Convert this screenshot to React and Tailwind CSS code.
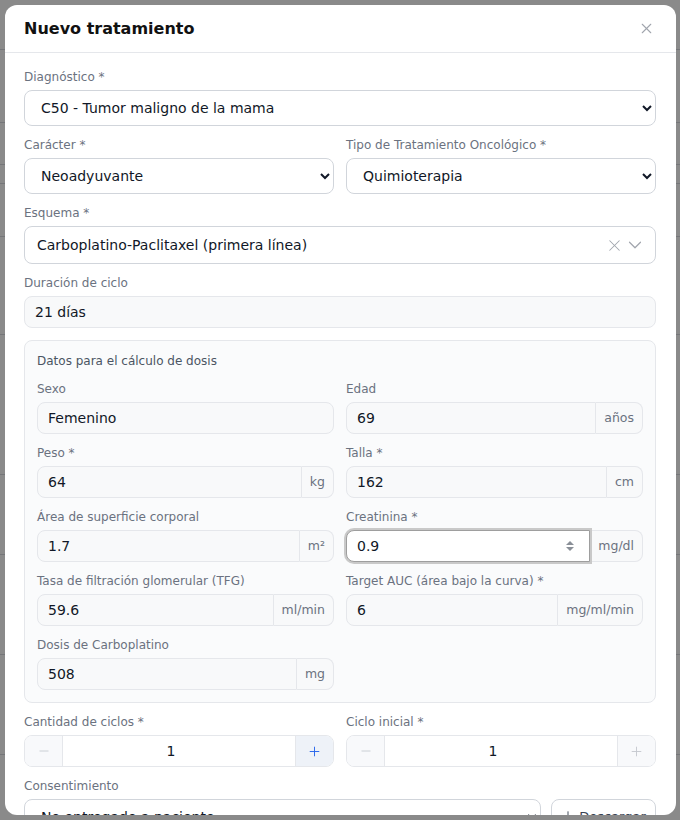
import { X, ChevronDown, Minus, Plus, Download } from 'lucide-react';

const font = { fontFamily: '"DejaVu Sans", "Noto Sans", sans-serif' };

function Label({ children }) {
  return <p className="mb-[5px] h-4 text-[12px] leading-4 text-[#6b7280]">{children}</p>;
}

function NativeSelect({ label, value, className = '' }) {
  return (
    <div className={className}>
      <Label>{label}</Label>
      <select
        defaultValue={value}
        className="h-9 w-full rounded-lg border border-[#d1d5db] bg-white px-3 text-[14px] text-[#111827]"
      >
        <option>{value}</option>
      </select>
    </div>
  );
}

function UnitInput({ label, value, unit, focused }) {
  return (
    <div>
      <Label>{label}</Label>
      <div className="flex h-8">
        {focused ? (
          <div className="relative z-10 flex flex-1 items-center rounded-l-lg border border-[#9e9e9e] bg-white shadow-[0_0_0_2px_#c9c9c9]">
            <input
              readOnly
              value={value}
              className="min-w-0 flex-1 bg-transparent px-[10px] text-[14px] text-[#111827] outline-none"
            />
            <svg width="10" height="14" viewBox="0 0 10 14" className="mr-[14px]">
              <path d="M1 6 L5 2 L9 6 Z" fill="#8a8f97" />
              <path d="M1 8 L5 12 L9 8 Z" fill="#8a8f97" />
            </svg>
          </div>
        ) : (
          <input
            readOnly
            value={value}
            className="min-w-0 flex-1 rounded-l-lg border border-[#e5e7eb] bg-[#f8f9fa] px-[10px] text-[14px] text-[#111827] outline-none"
          />
        )}
        <span className="flex items-center rounded-r-lg border border-l-0 border-[#e5e7eb] bg-[#f8f9fa] px-[8px] text-[12.5px] text-[#6b7280]">
          {unit}
        </span>
      </div>
    </div>
  );
}

function Stepper({ label, active }) {
  return (
    <div>
      <Label>{label}</Label>
      <div className="flex h-8 overflow-hidden rounded-lg border border-[#e5e7eb]">
        <button className="flex w-[38px] items-center justify-center border-r border-[#e5e7eb] bg-[#f8f9fb] text-[#c5c9cf]">
          <Minus size={14} strokeWidth={1.5} />
        </button>
        <div className="flex flex-1 items-center justify-center bg-white pr-4 text-[14px] text-[#111827]">1</div>
        <button
          className={
            active
              ? 'flex w-[38px] items-center justify-center border-l border-[#e5e7eb] bg-[#eef2f8] text-[#2563eb]'
              : 'flex w-[38px] items-center justify-center border-l border-[#e5e7eb] bg-[#f8f9fb] text-[#c5c9cf]'
          }
        >
          <Plus size={15} strokeWidth={1.5} />
        </button>
      </div>
    </div>
  );
}

const pageRows = [50, 73, 42, 19, 53, 98, 140, 80, 100, 100, 100];

export default function App() {
  return (
    <div className="relative h-[820px] w-[680px] overflow-hidden bg-white" style={font}>
      {/* page behind the dialog */}
      <div className="flex flex-col">
        {pageRows.map((h, i) => (
          <div key={i} className="border-b border-[#d9dbe0]" style={{ height: h }} />
        ))}
      </div>

      <div className="absolute inset-0 bg-[#000000]/[0.46] pl-[5px] pt-[5px]">
        <div className="flex h-[810px] w-[671px] flex-col overflow-hidden rounded-xl bg-white">
          <header className="flex h-12 shrink-0 items-center justify-between border-b border-[#e5e7eb] pl-[19px] pr-[21px]">
            <h2 className="text-[16px] font-bold text-[#111]">Nuevo tratamiento</h2>
            <X size={17} strokeWidth={1.5} className="text-[#a1a5ad]" />
          </header>

          <div className="flex flex-col gap-[11px] pl-[19px] pr-5 pt-4">
            <NativeSelect label="Diagnóstico *" value="C50 - Tumor maligno de la mama" />

            <div className="grid grid-cols-2 gap-3">
              <NativeSelect label="Carácter *" value="Neoadyuvante" />
              <NativeSelect label="Tipo de Tratamiento Oncológico *" value="Quimioterapia" />
            </div>

            <div>
              <Label>Esquema *</Label>
              <div className="flex h-[38px] items-center rounded-lg border border-[#d1d5db] bg-white pl-3 pr-[9px]">
                <span className="flex-1 text-[14px] text-[#111827]">Carboplatino-Paclitaxel (primera línea)</span>
                <X size={19} strokeWidth={1.3} className="text-[#a1a5ad]" />
                <ChevronDown size={22} strokeWidth={1.3} className="text-[#a1a5ad]" />
              </div>
            </div>

            <div>
              <Label>Duración de ciclo</Label>
              <input
                readOnly
                value="21 días"
                className="h-8 w-full rounded-lg border border-[#e5e7eb] bg-[#f8f9fa] px-[10px] text-[14px] text-[#111827] outline-none"
              />
            </div>

            <section className="mt-px rounded-lg border border-[#e5e7eb] bg-[#fafbfc] p-3">
              <p className="mb-3 h-4 text-[12px] leading-4 text-[#4b5563]">Datos para el cálculo de dosis</p>
              <div className="grid grid-cols-2 gap-x-3 gap-y-[11px]">
                <div>
                  <Label>Sexo</Label>
                  <input
                    readOnly
                    value="Femenino"
                    className="h-8 w-full rounded-lg border border-[#e5e7eb] bg-[#f8f9fa] px-[10px] text-[14px] text-[#111827] outline-none"
                  />
                </div>
                <UnitInput label="Edad" value="69" unit="años" />
                <UnitInput label="Peso *" value="64" unit="kg" />
                <UnitInput label="Talla *" value="162" unit="cm" />
                <UnitInput label="Área de superficie corporal" value="1.7" unit="m²" />
                <UnitInput label="Creatinina *" value="0.9" unit="mg/dl" focused />
                <UnitInput label="Tasa de filtración glomerular (TFG)" value="59.6" unit="ml/min" />
                <UnitInput label="Target AUC (área bajo la curva) *" value="6" unit="mg/ml/min" />
                <UnitInput label="Dosis de Carboplatino" value="508" unit="mg" />
              </div>
            </section>

            <div className="grid grid-cols-2 gap-3">
              <Stepper label="Cantidad de ciclos *" active />
              <Stepper label="Ciclo inicial *" />
            </div>

            <div>
              <Label>Consentimiento</Label>
              <div className="flex gap-[10px]">
                <select
                  defaultValue="No entregado a paciente"
                  className="h-9 flex-1 rounded-lg border border-[#d1d5db] bg-white px-3 text-[14px] text-[#111827]"
                >
                  <option>No entregado a paciente</option>
                </select>
                <button className="flex h-9 w-[105px] items-center justify-center gap-1 rounded-lg border border-[#d1d5db] bg-white text-[13px] text-[#374151]">
                  <Download size={14} strokeWidth={1.6} />
                  Descargar
                </button>
              </div>
            </div>
          </div>
        </div>
      </div>
    </div>
  );
}
